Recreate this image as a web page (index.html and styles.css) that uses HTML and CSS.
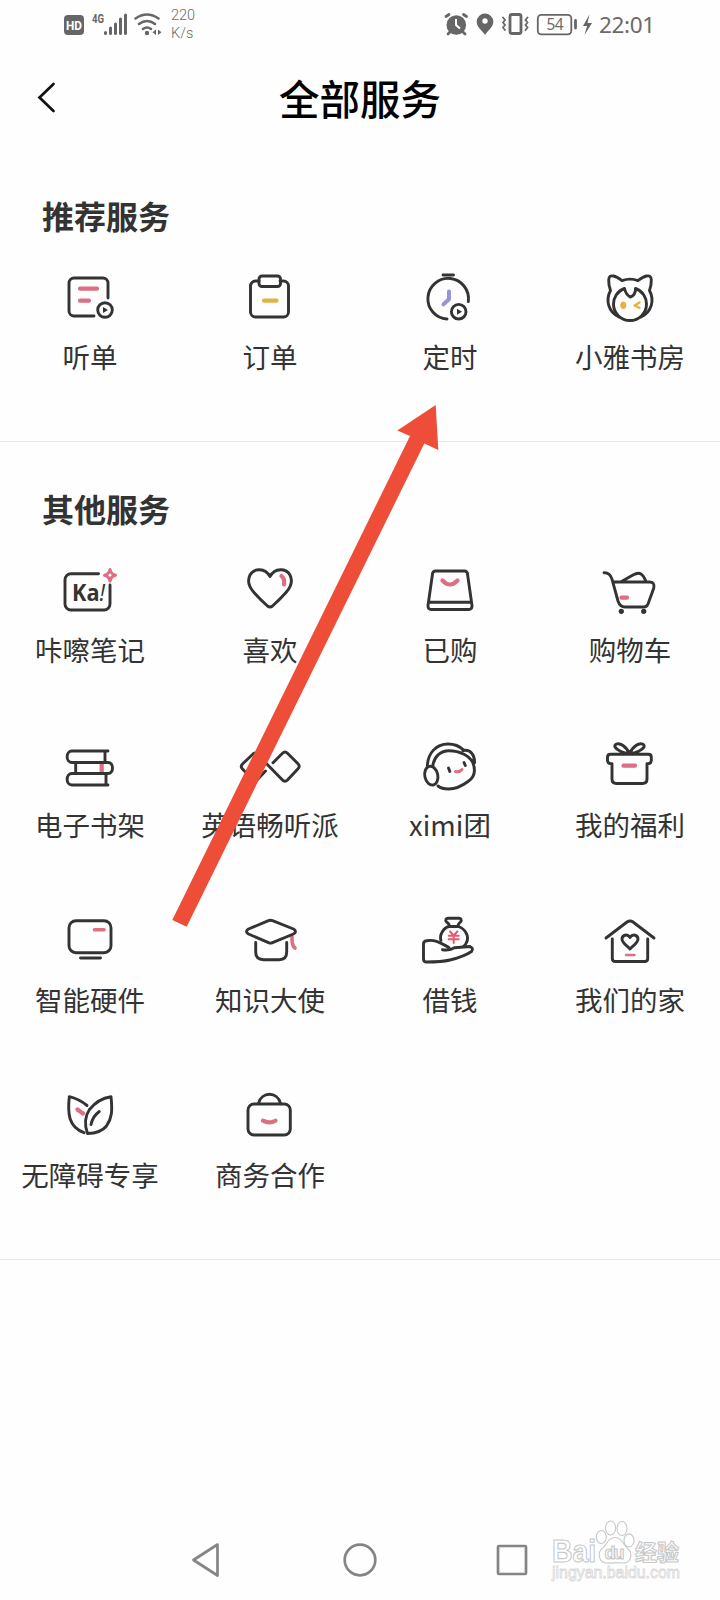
FILE: index.html
```html
<!DOCTYPE html>
<html lang="zh-CN">
<head>
<meta charset="utf-8">
<title>全部服务</title>
<link rel="stylesheet" href="styles.css">
</head>
<body>
<div class="screen">
  <div class="status">
    <svg class="status-left" width="102" height="32" viewBox="62 8 102 32">
      <rect class="gray-fill" x="64" y="15" width="20" height="20" rx="4"/>
      <text class="hd" x="66" y="30" textLength="16" lengthAdjust="spacingAndGlyphs">HD</text>
      <text class="net" x="92" y="22.500" textLength="12" lengthAdjust="spacingAndGlyphs">4G</text>
      <path class="bars" d="M105.500 32.500v1M110.500 28v5.500M115.500 24v9.500M120.500 19v14.500M125.500 15v18.500"/>
      <path class="wifi" d="M135.500 18.500q11.500-8 23 0M139 24q8-6 16 0M143 29q4-3 8 0"/>
      <circle class="gray-fill" cx="147" cy="33" r="2.200"/>
      <path class="gray-fill" d="M156 29.500v5.500l-3.500-2.700zM158 29.500v5.500l3.500-2.700z"/>
    </svg>
    <div class="speed"><span>220</span><span>K/s</span></div>
    <svg class="status-right" width="216" height="32" viewBox="444 8 216 32">
      <circle class="gray-fill" cx="456.300" cy="25" r="9.800"/>
      <path class="thick" d="M446 16.500l3-2M466.500 16.500l-3-2M450 32l-2 2M463 32l2 2"/>
      <path class="white-line" d="M456 19v6l4 3.500"/>
      <path class="gray-fill" d="M485 13.500a8.300 8.300 0 0 0-8.300 8.300c0 5 4.500 8 8.300 13 3.800-5 8.300-8 8.300-13a8.300 8.300 0 0 0-8.300-8.300z"/>
      <circle fill="#fff" cx="485" cy="21" r="2.700"/>
      <rect class="thick" x="510" y="14.500" width="11" height="19" rx="2"/>
      <path class="thin" d="M503 17.500l2 2.500-2 2.500 2 2.500-2 2.500 2 2.500M527.500 17.500l-2 2.500 2 2.500-2 2.500 2 2.500-2 2.500"/>
      <rect class="thin" x="537.800" y="14.800" width="33.500" height="19.500" rx="3.500"/>
      <text class="battery" x="546.500" y="30" textLength="17">54</text>
      <path class="thick" d="M575.500 20.500v7.500"/>
      <path class="gray-fill" d="M589.500 14.500l-6.500 11.500h4l-2.500 9 7.500-12h-4.500z"/>
      <text class="time" x="599" y="32.500" textLength="56">22:01</text>
    </svg>
  </div>
  <header class="header">
    <svg class="back" width="24" height="36" viewBox="0 0 24 36"><path d="M19.500 5L5.500 18.500l14 13.500"/></svg>
    <h1>全部服务</h1>
  </header>

  <section class="section">
    <h2>推荐服务</h2>
    <div class="grid">
      <div class="item">
        <svg class="icon" viewBox="0 0 64 60"><path d="M50 31V16a5 5 0 0 0-5-5H16a5 5 0 0 0-5 5v28a5 5 0 0 0 5 5h20"/><circle cx="47" cy="43" r="7.300"/><path class="solid" d="M45 40v6l5-3z"/><path class="pink" d="M22 21.700h17M22 33.700h9"/></svg>
        <span>听单</span>
      </div>
      <div class="item">
        <svg class="icon" viewBox="0 0 64 60"><path d="M21 14h-3.500a5 5 0 0 0-5 5v26a5 5 0 0 0 5 5h28a5 5 0 0 0 5-5V19a5 5 0 0 0-5-5H42"/><rect x="21" y="9" width="21.500" height="10.500" rx="3"/><path class="gold" d="M26 33.700h12.500"/></svg>
        <span>订单</span>
      </div>
      <div class="item">
        <svg class="icon" viewBox="0 0 64 60"><path d="M50.300 34.500A20.300 20.300 0 1 0 29 52M25 8h10.500"/><circle cx="40.700" cy="44.700" r="7.300"/><path class="solid" d="M39 41.700v6l5-3z"/><path class="violet" d="M31 24.500v7.800l-5.500 5"/></svg>
        <span>定时</span>
      </div>
      <div class="item">
        <svg class="icon" viewBox="0 0 64 60"><path d="M21 50C10 45 7.500 33 12.500 23.500Q10.500 18 10.700 13c.2-4 1.800-4.500 4.800-4 3.500.7 6 2.800 8.500 4.700 5-2 11-2 16 0 2.500-1.900 5-4 8.500-4.700 3-.5 4.600 0 4.800 4q.2 5-1.800 10.500C56.500 33 54 45 43 50"/><path d="M26.500 21.500C19 24 15.500 31 15.500 37a16.500 16.500 0 0 0 33 0c0-6-3.500-13-11-15.500.3 5-2.500 8-5 8.500-3-1-5-4.500-6-8.500z"/><ellipse class="gold-fill" cx="25.300" cy="38.300" rx="3" ry="3.800"/><path class="gold eye" d="M41.500 35.500l-5 3 5 2.300"/></svg>
        <span>小雅书房</span>
      </div>
    </div>
  </section>

  <section class="section other">
    <h2>其他服务</h2>
    <div class="grid">
      <div class="item">
        <svg class="icon" viewBox="0 0 64 60"><path d="M40.500 13.700H13a6 6 0 0 0-6 6V44a6 6 0 0 0 6 6h33a6 6 0 0 0 6-6V25"/><text class="ka" x="14" y="41" textLength="33" lengthAdjust="spacingAndGlyphs">Ka<tspan class="bang">!</tspan></text><path class="star" d="M52 9.500q1 4.800 5.500 5.800-4.500 1-5.500 5.800-1-4.800-5.500-5.800 4.500-1 5.500-5.800z"/></svg>
        <span>咔嚓笔记</span>
      </div>
      <div class="item">
        <svg class="icon" viewBox="0 0 64 60"><path d="M32 16.500C27 7.500 16 8 12 15c-3.500 7-.5 12.500 4 17.500 4 4.500 9 9.500 13.500 13.500q2.500 2 5 0C39 42 44 37 48 32.500c4.500-5 7.500-10.500 4-17.500C48 8 37 7.500 32 16.500z"/><path class="pink" d="M43.500 16q3.500 3 2.500 8.500"/></svg>
        <span>喜欢</span>
      </div>
      <div class="item">
        <svg class="icon" viewBox="0 0 64 60"><path d="M17.500 11h29a3 3 0 0 1 3 3L54 45.500q.2 4-3.500 4h-37q-3.700 0-3.500-4L14.500 14a3 3 0 0 1 3-3zM11 42.300h42"/><path class="pink" d="M24.500 20.500q7.500 8 15 0"/></svg>
        <span>已购</span>
      </div>
      <div class="item">
        <svg class="icon" viewBox="0 0 64 60"><path d="M6 12.700q6-.3 8 6.500L20 41q2 6 7 6h19q2.800 0 4-3l5.800-16q1.200-6-4.300-6H15M23.500 21.500L35 15c7-4 10-1 13 6.500"/><circle class="solid" cx="23.300" cy="51.300" r="2.600"/><circle class="solid" cx="45.700" cy="51.300" r="2.600"/><path class="pink" d="M23.500 37.700h5.500"/></svg>
        <span>购物车</span>
      </div>
      <div class="item">
        <svg class="icon" viewBox="0 0 64 60"><path d="M50 16H14c-6.500 0-6.500 11.500 0 11.500h36c6 0 6 11 0 11H14c-6.500 0-6.500 11.500 0 11.500h36M47 16v11.500M17.700 27.500v11M48 38.500V50"/><path class="pink flat" d="M43.700 29v8"/></svg>
        <span>电子书架</span>
      </div>
      <div class="item">
        <svg class="icon" viewBox="0 0 64 60"><path d="M35 27.700l9.500-9.500q2.500-2.500 5 0l10.500 10.500q2.500 2.500 0 5L49.500 45q-2.500 2.500-5 0L19.500 19.500q-2.500-3-5 0L4.500 29q-2.500 2.500 0 5l10 10.500q2.500 2.500 5 0l8-8.500"/></svg>
        <span>英语畅听派</span>
      </div>
      <div class="item">
        <svg class="icon" viewBox="0 0 64 60"><path d="M14.700 31.500C16 21 23 15.700 31 15.700c11 0 21 5.300 24 12.300 2.500 7 2 14-5 18.500-6 4.500-13 7.500-19.500 7.500-4.500 0-8-1-10.500-3M9.300 31C10 18 18 9 30 9c6 0 11.500 2 15.500 6M45 15.500c7-1.500 12 4 11.500 12.500"/><ellipse cx="13.300" cy="40.700" rx="6.500" ry="9.500" transform="rotate(-12 13.300 40.700)"/><path d="M30.500 33l1.300 3.500M46 27.500l1.300 3"/><path class="pink mouth" d="M37.500 36.500q4 1 6.500-2"/></svg>
        <span>ximi团</span>
      </div>
      <div class="item">
        <svg class="icon" viewBox="0 0 64 60"><path d="M12.500 19.300h38q2.800 0 2.800 3v3q0 3.500-4.300 3.500V44q0 4.500-4.500 4.500h-26Q14 48.500 14 44V28.800q-4.500 0-4.500-3.500v-3q0-3 3-3zM31.500 19C25 18 18.500 15 17 12c-1-3.500 4-4.500 8-1.500 3.500 2.500 5.500 5.500 6.500 8.500 1-3 3-6 6.500-8.500 4-3 9-2 8 1.500-1.500 3-8 6-14.500 7z"/><path class="pink" d="M25.500 30.700h11.500"/></svg>
        <span>我的福利</span>
      </div>
      <div class="item">
        <svg class="icon" viewBox="0 0 64 60"><rect x="11" y="10.700" width="42" height="32" rx="7"/><path d="M22.500 48h20"/><path class="pink thinner" d="M36.500 19.700h9.500"/></svg>
        <span>智能硬件</span>
      </div>
      <div class="item">
        <svg class="icon" viewBox="0 0 64 60"><path class="pink thinner" d="M54 27q-.5 8.500 3 11"/><path d="M30.500 10.700q2-.8 4 0L55.500 19q4 2.500 0 5L34.500 32.700q-2 .8-4 0L10.500 24q-4-2.500 0-5zM17.700 32.500V42q0 7.700 8 7.700h15.500q7.500 0 7.500-7.700v-9.500"/></svg>
        <span>知识大使</span>
      </div>
      <div class="item">
        <svg class="icon" viewBox="0 0 64 60"><path d="M31 16.500c1-2.500-1-3-2.500-4.500-1.500-2-.5-4 2-3.700h10c2.500-.3 3.500 1.700 2 3.700-1.500 1.500-3 2-2 4.500zM23 30.500c-2-5 2.500-13 8-14h9.500c7 2.500 11 10 8 16q-1 2.500-3 4"/><path d="M24.500 39.700q8 1 12-2L52 36.500q4 2 1.500 5C47 46 40 48 32 50c-7 1.700-16 2-23.500 2q-3 0-3-3V34q0-3 3-3.300C18 29 24 34 31 37.500"/><path class="pink coin" d="M32 21.500l3.700 4 3.700-4M35.700 25.500v7.500M30.700 25.700h10M30.700 29.300h10"/></svg>
        <span>借钱</span>
      </div>
      <div class="item">
        <svg class="icon" viewBox="0 0 64 60"><path d="M8 28l21-16q3-2.200 6 0l21 16M14.300 29v19.500q0 3 3 3h29.400q3 0 3-3V29"/><path d="M32 27.500c-3-4.500-8-2-8 1.500 0 4 5 6.700 8 10 3-3.300 8-6 8-10 0-3.500-5-6-8-1.500z"/><path class="pink tiny" d="M28 45h8.500"/></svg>
        <span>我们的家</span>
      </div>
      <div class="item">
        <svg class="icon" viewBox="0 0 64 60"><path d="M53 11.700C54.500 26 54 33 48.500 41c-4 5-11 7.300-19 7.500-3.500-10-2.500-17.500 2-24C37 17.500 44 13 53 11.700zM29 20.500Q21 14 11.300 11.700C9.500 29 10.500 42 26 47.700M33 39.500q1.500-8 8.300-13"/><path class="pink" d="M19.500 24.500l5.500 4"/></svg>
        <span>无障碍专享</span>
      </div>
      <div class="item">
        <svg class="icon" viewBox="0 0 64 60"><rect x="10" y="19" width="42.300" height="31" rx="6"/><path d="M20.500 18.300c3-12 19-12 22 0"/><path class="pink" d="M25 35.700q6.500 3.500 12.500 0"/></svg>
        <span>商务合作</span>
      </div>
    </div>
  </section>

  <nav class="nav">
    <svg viewBox="0 0 36 36"><path d="M27.500 2.500L3.500 18l24 15.500z"/></svg>
    <svg viewBox="0 0 36 36"><circle cx="18" cy="18" r="15.300"/></svg>
    <svg viewBox="0 0 36 36"><rect x="4" y="4" width="28" height="28" rx="1"/></svg>
  </nav>

  <svg class="arrow" width="720" height="1600" viewBox="0 0 720 1600"><path d="M435.700 405L397.300 430.500 410 436 172.300 920l14.400 6.700L424.300 443.500l14 6.500z"/></svg>
  <svg class="watermark" width="136" height="70" viewBox="548 1518 136 70">
    <text class="wm-bai" x="552" y="1563.500" textLength="44" lengthAdjust="spacingAndGlyphs">Bai</text>
    <ellipse cx="601.300" cy="1539" rx="5" ry="6.500"/><ellipse cx="610.600" cy="1530" rx="5" ry="7"/><ellipse cx="622" cy="1530.500" rx="5" ry="7"/><ellipse cx="629" cy="1542.400" rx="5" ry="6.500"/>
    <path d="M614.700 1539.500c-7 0-8 8-12.500 11-5 4-3.500 14 4 14.500 6 .5 11-1 17 0 8 .5 10-10 4.500-14.500-5-4-5.500-11-13-11z"/>
    <text class="wm-du" x="604.500" y="1561" textLength="20">du</text>
    <text class="wm-cn" x="635" y="1562" textLength="44">经验</text>
    <text class="wm-url" x="552" y="1580" textLength="128" lengthAdjust="spacingAndGlyphs">jingyan.baidu.com</text>
  </svg>
</div>
</body>
</html>
```
FILE: styles.css
```css
* { box-sizing: border-box; }

body {
  margin: 0;
  background: #fefefe;
  color: #333;
  font-family: KaiTi, "Noto Sans CJK SC", sans-serif;
}

.screen {
  position: relative;
  display: flex;
  flex-direction: column;
  width: 720px;
  height: 1600px;
  overflow: hidden;
}

.status {
  display: flex;
  align-items: center;
  height: 48px;
  padding: 0 60px 0 62px;
  font-family: Roboto, sans-serif;
}

.status-right { margin-left: auto; }

.speed {
  display: flex;
  flex-direction: column;
  margin: 2px 0 0 7px;
  color: #6c6c6c;
  font-size: 14.5px;
  font-weight: 300;
  line-height: 18px;
}

.gray-fill { fill: #666; }
.bars, .wifi, .thick, .thin {
  fill: none;
  stroke: #666;
  stroke-width: 3;
  stroke-linecap: round;
}
.wifi { stroke-width: 2.6; }
.thin { stroke-width: 1.8; }
.thick { stroke-width: 2.8; }
.white-line { fill: none; stroke: #fff; stroke-width: 2; }
.hd { fill: #fff; font: bold 12px Roboto, sans-serif; }
.net { fill: #666; font: bold 12px Roboto, sans-serif; }
.battery { fill: #6c6c6c; font: 400 15.500px "Noto Sans", sans-serif; }
.time { fill: #6a6a6a; font: 400 22.500px "Noto Sans", sans-serif; }

.header {
  display: grid;
  grid-template-columns: 80px 1fr 80px;
  align-items: center;
  height: 104px;
  color: #000;
}

.header h1 {
  margin: -4px 0 0;
  font-size: 40.500px;
  font-weight: 500;
  line-height: 60px;
  text-align: center;
}

.back {
  margin: -6px 0 0 34px;
  fill: none;
  stroke: #111;
  stroke-width: 2.7;
  stroke-linecap: round;
}

.section {
  height: 290px;
  padding-top: 38px;
  border-bottom: 1px solid #e8e8e8;
}

.other { height: 818px; padding-top: 41px; }

.section h2 {
  margin: 0 0 27px 42px;
  font-size: 32px;
  font-weight: 700;
  line-height: 50px;
}

.grid {
  display: grid;
  grid-template-columns: repeat(4, 180px);
  grid-auto-rows: 175px;
}

.item {
  display: flex;
  flex-direction: column;
  align-items: center;
  gap: 9px;
}

.item span {
  font-size: 27.5px;
  line-height: 40px;
  white-space: nowrap;
}

.icon {
  width: 64px;
  height: 60px;
  fill: none;
  stroke: #333;
  stroke-width: 2.9;
  stroke-linecap: round;
  stroke-linejoin: round;
}

.icon .solid { fill: #333; stroke: none; }
.icon .pink { stroke: #dc6f82; stroke-width: 4.2; }
.icon .gold { stroke: #e2b340; stroke-width: 4.2; }
.icon .eye { stroke-width: 2.4; }
.icon .gold-fill { fill: #e8b041; stroke: none; }
.icon .violet { stroke: #9595d6; stroke-width: 4; }
.icon .flat { stroke-linecap: butt; }
.icon .thinner { stroke-width: 3.600; }
.icon .mouth { stroke-width: 3; }
.icon .tiny { stroke-width: 2.4; }
.icon .coin { stroke: #e8586f; stroke-width: 2; }
.icon .star { stroke: #dc6f82; stroke-width: 3; }
.ka { fill: #333; stroke: none; font: bold 24px "Open Sans", sans-serif; }
.bang { font-style: italic; font-weight: 400; }

.nav {
  display: flex;
  justify-content: space-between;
  margin-top: auto;
  padding: 0 190px 22px;
}

.nav svg {
  width: 36px;
  height: 36px;
  fill: none;
  stroke: #858585;
  stroke-width: 2.7;
  stroke-linejoin: round;
}

/* Pointer annotation drawn across the grid */
.arrow {
  position: absolute;
  top: 0;
  left: 0;
  fill: #ee4d37;
  pointer-events: none;
}

.watermark {
  position: absolute;
  left: 548px;
  top: 1516px;
  fill: #fff;
  stroke: #c8c8c8;
  stroke-width: 1.1;
}

.wm-bai { font: bold 31px "Liberation Sans", sans-serif; }
.wm-du { font: bold 18px "Liberation Sans", sans-serif; }
.wm-cn { font: bold 22px "Noto Sans CJK SC", sans-serif; }
.wm-url { stroke: #d8d8d8; stroke-width: .8; font: 16px "Liberation Sans", sans-serif; }
```
